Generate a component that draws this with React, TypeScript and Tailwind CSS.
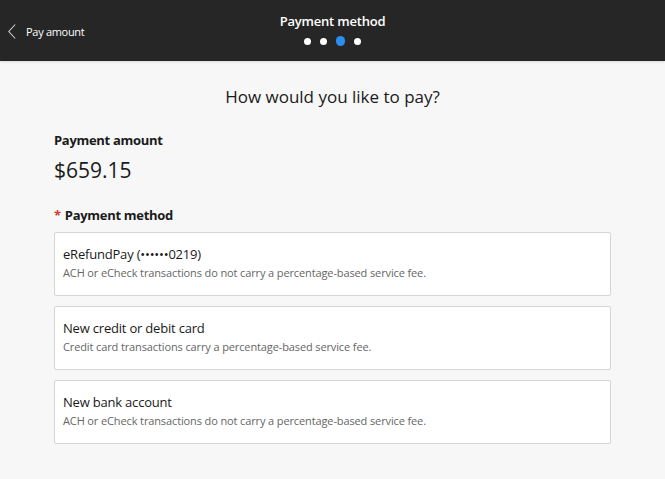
import React from "react";

const options = [
  { title: "eRefundPay (••••••0219)", desc: "ACH or eCheck transactions do not carry a percentage-based service fee." },
  { title: "New credit or debit card", desc: "Credit card transactions carry a percentage-based service fee." },
  { title: "New bank account", desc: "ACH or eCheck transactions do not carry a percentage-based service fee." },
];

export default function App() {
  return (
    <div className="w-[665px] h-[479px] bg-[#f7f7f7] text-[#1a1a1a] overflow-hidden" style={{ fontFamily: '"Open Sans", "Noto Sans", sans-serif' }}>
      <header className="relative h-[61px] bg-[#262626] shadow-[0_1px_2px_rgba(0,0,0,0.12)] flex flex-col items-center">
        <div className="absolute left-[8px] top-[24px] flex items-center gap-[10px] text-white">
          <svg width="8" height="15" viewBox="0 0 8 15" fill="none">
            <path d="M7.2 0.5 L0.8 7.5 L7.2 14.5" stroke="#cfcfcf" strokeWidth="1.1" />
          </svg>
          <span className="text-[11px] leading-none tracking-[-0.3px]">Pay amount</span>
        </div>
        <div className="mt-[12px] text-white text-[13px] font-semibold leading-[18px] tracking-[-0.2px]">Payment method</div>
        <div className="mt-[6px] flex items-center gap-[9px]">
          <span className="w-[7px] h-[7px] rounded-full bg-white" />
          <span className="w-[7px] h-[7px] rounded-full bg-white" />
          <span className="w-[9px] h-[10px] rounded-full bg-[#2b8ef0]" />
          <span className="w-[7px] h-[7px] rounded-full bg-white" />
        </div>
      </header>
      <main className="px-[54px] pt-[25px]">
        <h1 className="text-center text-[17px] leading-[22px] font-medium">How would you like to pay?</h1>
        <div className="mt-[23px] text-[13px] font-bold leading-[18px] tracking-[-0.3px]">Payment amount</div>
        <div className="mt-[8px] text-[21px] leading-[26px]">$659.15</div>
        <div className="mt-[23px] text-[13px] font-bold leading-[18px] tracking-[-0.3px]">
          <span className="text-[#d0392e] mr-[4px]">*</span>Payment method
        </div>
        <div className="mt-[8px] flex flex-col gap-[10px] w-[557px]">
          {options.map((o) => (
            <div key={o.title} className="h-[64px] bg-white border border-[#d4d4d4] rounded-[2px] px-[8px] pt-[12px]">
              <div className="text-[13px] leading-[18px] text-[#1a1a1a] tracking-[-0.2px]">{o.title}</div>
              <div className="mt-[2px] text-[11px] leading-[16px] text-[#666] tracking-[-0.12px]">{o.desc}</div>
            </div>
          ))}
        </div>
      </main>
    </div>
  );
}
